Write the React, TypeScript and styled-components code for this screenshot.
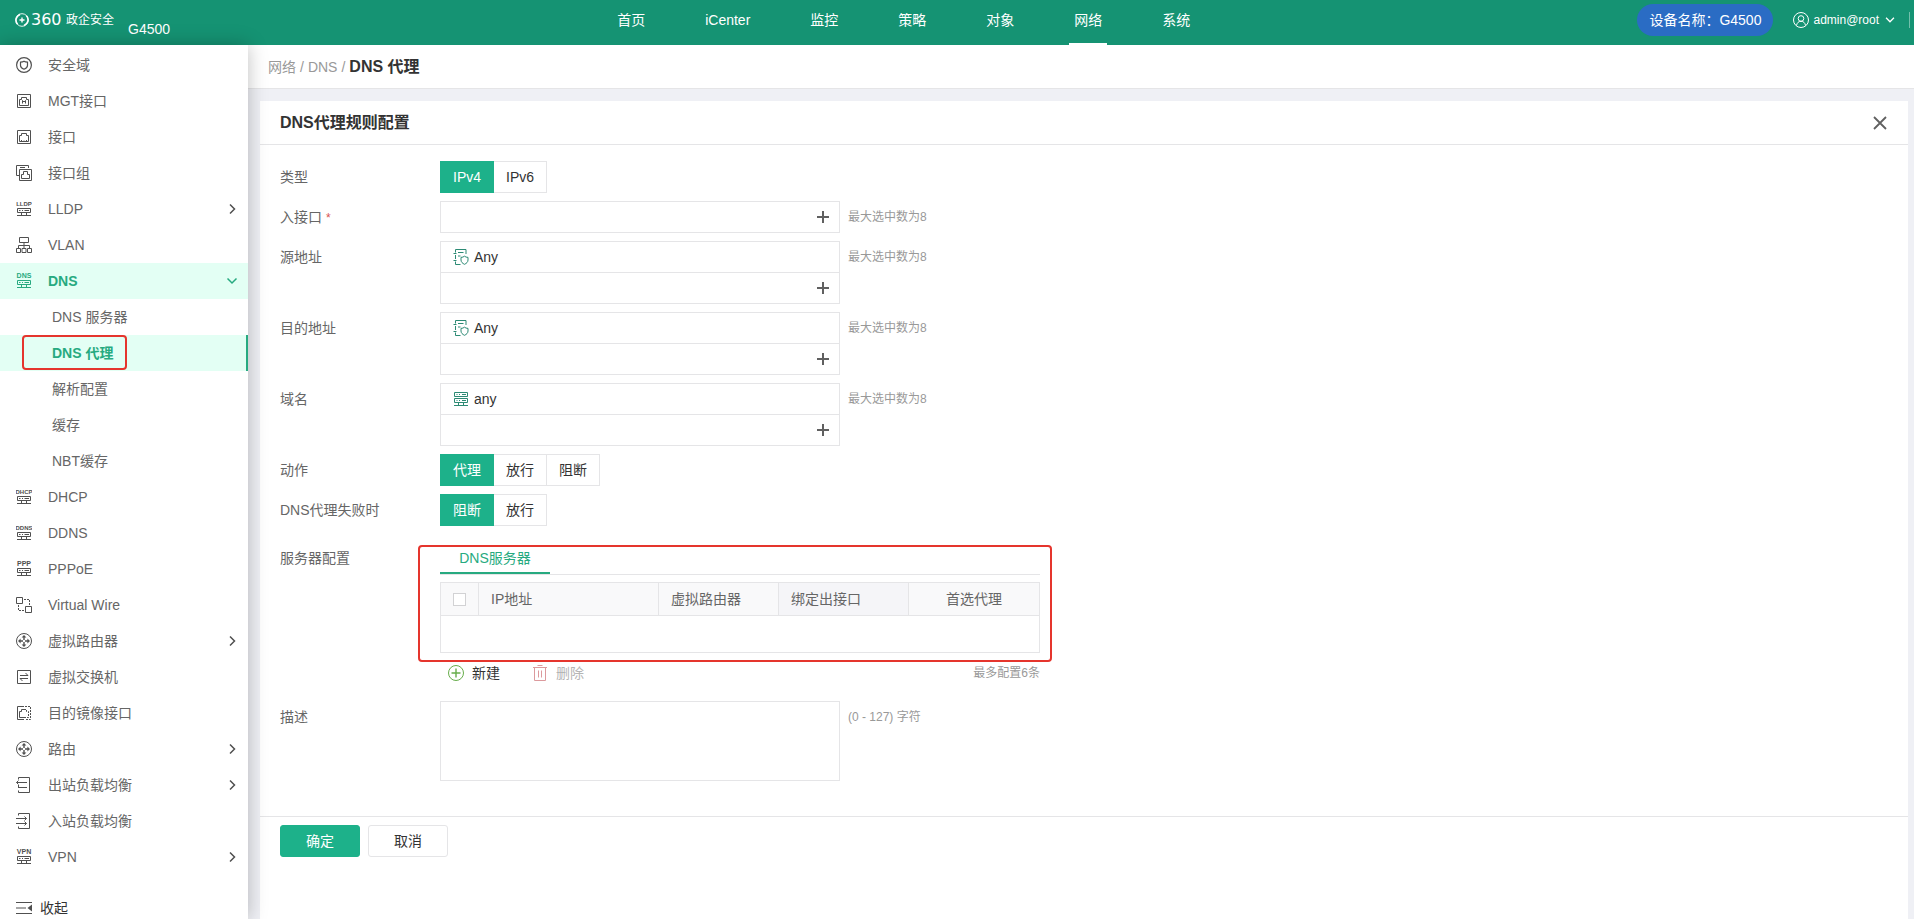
import React, { useState } from 'react';
import styled, { createGlobalStyle, css } from 'styled-components';

const color = {
  header: '#159373',
  primary: '#1db18a',
  active: '#27aa80',
  activeBg: '#e3fff4',
  text: '#333',
  label: '#666',
  icon: '#505050',
  muted: '#999',
  border: '#e5e5e7',
  page: '#eff0f5',
  mark: '#e5352d',
};

const fontStack = '"Liberation Sans", "Noto Sans CJK SC", sans-serif';

const GlobalStyle = createGlobalStyle`
  *, *::before, *::after { box-sizing: border-box; }
  body {
    margin: 0;
    background: ${color.page};
    color: ${color.text};
    font-family: ${fontStack};
    font-size: 14px;
    line-height: 20px;
  }
  button, input, textarea { font: inherit; color: inherit; }
  a { color: inherit; text-decoration: none; }
  svg { display: block; flex: none; }
`;

/* ---------- icons ---------- */

const Svg = styled.svg.attrs({ fill: 'none', stroke: 'currentColor', 'aria-hidden': true })<{ $size?: number }>`
  width: ${(p) => p.$size ?? 16}px;
  height: ${(p) => p.$size ?? 16}px;
`;

const Icon = ({ size = 16, children }: { size?: number; children: React.ReactNode }) => (
  <Svg $size={size} viewBox="0 0 16 16">
    {children}
  </Svg>
);

const ShieldIcon = () => (
  <Icon>
    <circle cx="8" cy="8" r="7.4" strokeWidth="1.2" />
    <path
      d="M4.500 5.200C6 5 7 4.800 8 4.200c1 .6 2 .8 3.500 1v3.300c0 1.700-1.500 2.900-3.500 3.700-2-.8-3.500-2-3.500-3.700z"
      strokeWidth="1.200"
    />
  </Icon>
);

const PortIcon = ({ management }: { management?: boolean }) => (
  <Icon>
    <path d="M1.500 1.500h13v13h-13z" />
    <path d="M3.500 12.500v-6h2v-2h5v2h2v6z" />
    {management ? (
      <path d="M6.500 10.500v-3l1.500 1.500 1.500-1.500v3" />
    ) : (
      <path d="M5.500 12.500v-1.500M8 12.500v-1M10.500 12.500v-1.500" />
    )}
  </Icon>
);

const PortGroupIcon = () => (
  <Icon>
    <path d="M3 10.500H.5V.5h12V3M4 2.500h5" />
    <path d="M3.500 4.500h12v11h-12z" />
    <path d="M5.500 13.500v-4h2v-3h4v3h2v4z" />
  </Icon>
);

const ServerIcon = ({ label }: { label: string }) => {
  const long = label.length > 3;
  return (
    <Icon>
      <text
        x="8"
        y="5"
        textAnchor="middle"
        fontSize={long ? 6 : 7}
        fontWeight="700"
        fill="currentColor"
        stroke="none"
        fontFamily={long ? 'Liberation Sans Narrow, Liberation Sans' : 'Liberation Sans'}
      >
        {label}
      </text>
      <path d="M1.500 7.500h13v4h-13z" />
      <path d="M3 9.500h1.500M6 9.500h1M8.500 9.500H13M5.500 11.500v3M10.500 11.500v3M1 14.500h14" />
    </Icon>
  );
};

const TreeIcon = () => (
  <Icon>
    <path d="M3.500 .5h9v5h-9zM8 5.500V11M2.500 11V8.500h11V11M.5 11.500h4v4h-4zM6 11.500h4v4H6zM11.500 11.500h4v4h-4z" />
  </Icon>
);

const WireIcon = () => (
  <Icon>
    <path d="M.5 .5h6v6h-6zM9.500 9.500h6v6h-6z" />
    <path d="M8 2.500h5.500V9M2.500 8v5.500H9" strokeDasharray="2 1" />
  </Icon>
);

const RouterIcon = () => (
  <Icon>
    <circle cx="8" cy="8" r="7.500" />
    <path
      d="M8 2l2.400 2.600H5.600zM8 14l-2.400-2.600h4.800zM2 8l2.600-2.400v4.800zM14 8l-2.600 2.400V5.600z"
      fill="currentColor"
      stroke="none"
    />
    <path d="M8 4v3M8 9v3M4 8h3M9 8h3" strokeWidth="1.400" />
  </Icon>
);

const SwitchIcon = () => (
  <Icon>
    <path d="M1.500 1.500h13v13h-13zM4 6.500h8L9.500 4M12 9.500H4l2.500 2.500" />
  </Icon>
);

const MirrorIcon = () => (
  <Icon>
    <path d="M8 1.500H1.500v13H8" />
    <path d="M9 1.500h5.500v13H9" strokeDasharray="2 1" />
    <path d="M8 4.500H5.500v2h-2v6H8" />
    <path d="M8 4.500h2.500v2h2v6H8" strokeDasharray="2 1" />
  </Icon>
);

const OutboundIcon = () => (
  <Icon>
    <path d="M2.500 2.500v-2h11v15h-11v-2M.5 5.500H11M2 10.500h9M2.500 3.500L.5 5.500l2 2M2.500 8v2.500" />
  </Icon>
);

const InboundIcon = () => (
  <Icon>
    <path d="M2.500 2.500v-2h11v15h-11v-2M0 5.500h10.500M0 10.500h10.500M8.500 3.500l2 2-2 2M8.500 8.500l2 2-2 2" />
  </Icon>
);

const CollapseIcon = () => (
  <Icon>
    <path d="M0 2.500h16M0 8h10M0 13.500h16" />
    <path d="M16 4.500v7L11.500 8z" fill="currentColor" stroke="none" />
  </Icon>
);

const ChevronRight = () => (
  <Icon>
    <path d="M6 3.500L10.500 8 6 12.500" strokeWidth="1.500" />
  </Icon>
);

const ChevronDown = ({ size }: { size?: number }) => (
  <Icon size={size}>
    <path d="M3.500 5.500L8 10l4.500-4.500" strokeWidth="1.500" />
  </Icon>
);

const UserIcon = () => (
  <Icon>
    <circle cx="8" cy="8" r="7.500" />
    <circle cx="8" cy="6.500" r="2.800" />
    <path d="M3.500 13.500C4 10.800 5.500 9.300 8 9.300s4 1.500 4.500 4.200" />
  </Icon>
);

const CloseIcon = () => (
  <Icon>
    <path d="M2 2l12 12M14 2L2 14" strokeWidth="1.800" />
  </Icon>
);

const PlusIcon = () => (
  <Icon>
    <path d="M8 2v12M2 8h12" strokeWidth="2" />
  </Icon>
);

const AddressIcon = () => (
  <Icon>
    <path d="M2.500 3.500v-3h10.500V5M5 3.500h5.500M2.500 6v4M5 7h2.500M2.500 12.500v3h5M.5 4.500h3M.5 11.500h3" />
    <path d="M11.500 7.200c1 .8 2 1.100 3.500 1.200v2.600c0 2-1.500 3.400-3.500 4.300-2-.9-3.500-2.300-3.500-4.300V8.400c1.500-.1 2.500-.4 3.500-1.200z" />
  </Icon>
);

const DomainIcon = () => (
  <Icon>
    <path d="M1.500 1.500h13v4h-13zM1.500 7.500h13v4h-13zM3.500 3.500h1M6 3.500h1M9 3.500h4M3.500 9.500h1M6 9.500h1M9 9.500h4M5.500 11.500v3M10.500 11.500v3M1 14.500h14" />
  </Icon>
);

const AddIcon = () => (
  <Icon>
    <circle cx="8" cy="8" r="7.500" />
    <path d="M8 3.500v9M3.500 8h9" strokeWidth="1.400" />
  </Icon>
);

const TrashIcon = () => (
  <Icon>
    <path d="M1 2.500h14M5.500 .5h5M2.500 2.500v13h11v-13M6.500 5.500v7M9.500 5.500v7" />
  </Icon>
);

const LogoIcon = () => (
  <Svg $size={14} viewBox="0 0 14 14">
    <circle cx="7" cy="7" r="6.300" strokeWidth=".9" />
    <path d="M2.600 11.200A6 6 0 0 1 5 1.500M11.400 2.800A6 6 0 0 1 9 12.500" strokeWidth="1.500" />
    <path d="M7 4.500v5M4.500 7h5" strokeWidth="1.400" />
  </Svg>
);

/* ---------- header ---------- */

const Page = styled.div`
  display: flex;
  flex-direction: column;
  min-height: 100vh;
`;

const Header = styled.header`
  display: flex;
  justify-content: space-between;
  height: 45px;
  padding: 0 4px 0 15px;
  background: ${color.header};
  color: #fff;
`;

const Brand = styled.div`
  display: flex;
  gap: 14px;
`;

const Logo = styled.a`
  display: flex;
  align-items: center;
  gap: 2px;
  height: 40px;
  width: 99px;
  white-space: nowrap;
`;

const LogoDigits = styled.span`
  flex: 1;
  font-family: 'DejaVu Sans', sans-serif;
  font-size: 16px;
`;

const LogoName = styled.span`
  font-size: 12px;
`;

const Model = styled.span`
  padding-top: 19px;
`;

const TopNav = styled.nav`
  display: flex;
`;

const TopLink = styled.a<{ $active?: boolean }>`
  display: flex;
  flex-direction: column;
  align-items: center;
  justify-content: space-between;
  padding: 10px 30px 0;

  &::after {
    content: '';
    width: 38px;
    height: 2px;
    margin: 0 -5px;
    background: ${(p) => (p.$active ? '#fff' : 'transparent')};
  }
`;

const HeaderTools = styled.div`
  display: flex;
  align-items: center;
  height: 40px;
`;

const DevicePill = styled.span`
  padding: 6px 12px;
  border-radius: 16px;
  background: #2a6cc4;
  white-space: nowrap;
`;

const UserButton = styled.button`
  display: flex;
  align-items: center;
  gap: 4px;
  margin-left: 20px;
  padding: 0 12px 0 0;
  border: 0;
  border-right: 1px solid #73bfab;
  background: none;
  font-size: 12px;
  line-height: 16px;
`;

/* ---------- sidebar ---------- */

const Body = styled.div`
  display: flex;
  flex: 1;
`;

const Sidebar = styled.aside`
  position: relative;
  z-index: 1;
  display: flex;
  flex-direction: column;
  flex: none;
  width: 248px;
  padding-top: 2px;
  background: #fff;
  box-shadow: 0 0 18px rgba(0, 0, 0, 0.25);
  color: ${color.label};
`;

const activeRow = css`
  background: ${color.activeBg};
  color: ${color.active};
  font-weight: 700;
`;

const SideLink = styled.a<{ $active?: boolean }>`
  display: flex;
  align-items: center;
  gap: 16px;
  height: 36px;
  padding: 0 8px 0 16px;

  svg { color: ${color.icon}; }
  ${(p) => p.$active && activeRow}
  ${(p) => p.$active && css`svg { color: ${color.active}; }`}
`;

const SideText = styled.span`
  flex: 1;
`;

const SubLink = styled.a<{ $active?: boolean }>`
  position: relative;
  display: flex;
  align-items: center;
  height: 36px;
  padding-left: 52px;
  ${(p) => p.$active && activeRow}
  border-right: 2px solid ${(p) => (p.$active ? color.active : 'transparent')};
`;

const Marker = styled.span`
  position: absolute;
  border: 2px solid ${color.mark};
  border-radius: 4px;
  pointer-events: none;
`;

const LinkMarker = styled(Marker)`
  inset: 0 119px 1px 22px;
`;

const CollapseButton = styled.button`
  display: flex;
  align-items: center;
  gap: 8px;
  margin-top: auto;
  padding: 0 16px 1px;
  border: 0;
  background: none;
  color: ${color.text};

  svg { color: ${color.icon}; }
`;

/* ---------- content ---------- */

const Content = styled.main`
  display: flex;
  flex-direction: column;
  flex: 1;
  min-width: 0;
`;

const Breadcrumb = styled.nav`
  display: flex;
  align-items: baseline;
  gap: 4px;
  height: 44px;
  padding: 10px 20px 0;
  border-bottom: 1px solid ${color.border};
  background: #fff;
  color: ${color.muted};
`;

const Current = styled.strong`
  color: ${color.text};
  font-size: 16px;
  line-height: 24px;
`;

const Panel = styled.section`
  flex: 1;
  margin: 12px 6px 0 12px;
  background: #fff;
`;

const PanelHeader = styled.header`
  display: flex;
  align-items: center;
  justify-content: space-between;
  height: 44px;
  padding: 0 20px;
  border-bottom: 1px solid ${color.border};
`;

const PanelTitle = styled.h1`
  margin: 0;
  font-size: 16px;
  line-height: 24px;
`;

const IconButton = styled.button`
  display: flex;
  padding: 0;
  border: 0;
  background: none;
  color: #606060;
`;

const Form = styled.form`
  display: flex;
  flex-direction: column;
`;

const Fields = styled.div`
  display: flex;
  flex-direction: column;
  gap: 8px;
  padding: 16px 20px 35px;
`;

const Row = styled.div<{ $spaced?: boolean }>`
  display: flex;
  align-items: flex-start;
  margin-top: ${(p) => (p.$spaced ? 8 : 0)}px;
`;

const rowLabel = css`
  width: 160px;
  flex: none;
  line-height: 32px;
  color: ${color.label};
`;

const RowLabel = styled.label`
  ${rowLabel}
`;

const RowCaption = styled.span`
  ${rowLabel}
`;

const Required = styled.span`
  margin-left: 4px;
  color: #d9534f;
  font-size: 12px;
  line-height: 16px;
`;

const Hint = styled.span`
  margin-left: 8px;
  color: ${color.muted};
  font-size: 12px;
  line-height: 32px;
`;

const Segments = styled.div`
  display: flex;
`;

const Segment = styled.label<{ $checked: boolean }>`
  position: relative;
  min-width: 54px;
  padding: 5px 12px;
  border: 1px solid ${(p) => (p.$checked ? color.primary : color.border)};
  background: ${(p) => (p.$checked ? color.primary : '#fff')};
  color: ${(p) => (p.$checked ? '#fff' : color.text)};
  text-align: center;
  cursor: pointer;

  & + & { margin-left: -1px; }
  ${(p) => p.$checked && 'z-index: 1;'}

  input {
    position: absolute;
    inset: 0;
    margin: 0;
    opacity: 0;
    cursor: pointer;
  }
`;

const Picker = styled.div`
  width: 400px;
  border: 1px solid ${color.border};
  background: #fff;
`;

const PickedItem = styled.div`
  display: flex;
  align-items: center;
  gap: 5px;
  height: 31px;
  padding: 0 12px;
  border-bottom: 1px solid ${color.border};

  svg { color: #2c8a74; }
`;

const PickerEntry = styled.div`
  display: flex;
  align-items: center;
  height: 30px;
  padding-right: 8px;
`;

const PickerInput = styled.input`
  flex: 1;
  min-width: 0;
  height: 100%;
  padding: 0 12px;
  border: 0;
  outline: 0;
  background: none;
`;

const ServerBlock = styled.div`
  width: 600px;
`;

const ServerFrame = styled.div`
  position: relative;
`;

const FrameMarker = styled(Marker)`
  inset: 3px -12px -9px -22px;
`;

const Tabs = styled.div`
  display: flex;
  margin-bottom: 7px;
  border-bottom: 1px solid ${color.border};
`;

const Tab = styled.button`
  width: 110px;
  height: 32px;
  padding: 2px 0 0;
  border: 0;
  border-bottom: 2px solid ${color.active};
  background: none;
  color: ${color.active};
`;

const Table = styled.table`
  width: 100%;
  border: 1px solid ${color.border};
  border-spacing: 0;
  table-layout: fixed;
  color: ${color.label};

  td { height: 36px; padding: 0; }
`;

const HeadCell = styled.th<{ $width?: number; $center?: boolean; $hover?: boolean }>`
  width: ${(p) => (p.$width ? `${p.$width}px` : 'auto')};
  height: 33px;
  padding: 0 12px;
  border-right: 1px solid ${color.border};
  border-bottom: 1px solid ${color.border};
  background: ${(p) => (p.$hover ? '#f5f5f8' : '#f9f9fa')};
  font-weight: 400;
  text-align: ${(p) => (p.$center ? 'center' : 'left')};

  &:last-child { border-right: 0; }
`;

const Checkbox = styled.input.attrs({ type: 'checkbox' })`
  display: block;
  appearance: none;
  width: 13px;
  height: 13px;
  margin: 0;
  border: 1px solid #d2d2d4;
  background: #fff;
`;

const Actions = styled.div`
  display: flex;
  align-items: center;
  gap: 32px;
  height: 24px;
  margin-top: 8px;
  padding-left: 8px;
`;

const ActionButton = styled.button<{ $icon: string }>`
  display: flex;
  align-items: center;
  gap: 8px;
  padding: 0;
  border: 0;
  background: none;

  svg { color: ${(p) => p.$icon}; }
  &:disabled { color: #b5b5b5; }
`;

const Limit = styled.span`
  margin-left: auto;
  color: ${color.muted};
  font-size: 12px;
`;

const TextArea = styled.textarea`
  display: block;
  width: 400px;
  height: 80px;
  padding: 5px 12px;
  border: 1px solid ${color.border};
  outline: 0;
  resize: none;
`;

const Footer = styled.footer`
  display: flex;
  gap: 8px;
  padding: 8px 20px;
  border-top: 1px solid ${color.border};
`;

const Button = styled.button<{ $primary?: boolean }>`
  width: 80px;
  height: 32px;
  padding: 0;
  border: 1px solid ${(p) => (p.$primary ? color.primary : color.border)};
  border-radius: 3px;
  background: ${(p) => (p.$primary ? color.primary : '#fff')};
  color: ${(p) => (p.$primary ? '#fff' : color.text)};
`;

/* ---------- data ---------- */

const topItems = ['首页', 'iCenter', '监控', '策略', '对象', '网络', '系统'];

interface SideItem {
  text: string;
  icon: React.ReactNode;
  expandable?: boolean;
  children?: string[];
}

const sideItems: SideItem[] = [
  { text: '安全域', icon: <ShieldIcon /> },
  { text: 'MGT接口', icon: <PortIcon management /> },
  { text: '接口', icon: <PortIcon /> },
  { text: '接口组', icon: <PortGroupIcon /> },
  { text: 'LLDP', icon: <ServerIcon label="LLDP" />, expandable: true },
  { text: 'VLAN', icon: <TreeIcon /> },
  {
    text: 'DNS',
    icon: <ServerIcon label="DNS" />,
    children: ['DNS 服务器', 'DNS 代理', '解析配置', '缓存', 'NBT缓存'],
  },
  { text: 'DHCP', icon: <ServerIcon label="DHCP" /> },
  { text: 'DDNS', icon: <ServerIcon label="DDNS" /> },
  { text: 'PPPoE', icon: <ServerIcon label="PPP" /> },
  { text: 'Virtual Wire', icon: <WireIcon /> },
  { text: '虚拟路由器', icon: <RouterIcon />, expandable: true },
  { text: '虚拟交换机', icon: <SwitchIcon /> },
  { text: '目的镜像接口', icon: <MirrorIcon /> },
  { text: '路由', icon: <RouterIcon />, expandable: true },
  { text: '出站负载均衡', icon: <OutboundIcon />, expandable: true },
  { text: '入站负载均衡', icon: <InboundIcon /> },
  { text: 'VPN', icon: <ServerIcon label="VPN" />, expandable: true },
];

/* ---------- form parts ---------- */

function SegmentRow({ label, name, options }: { label: string; name: string; options: string[] }) {
  const [value, setValue] = useState(options[0]);
  return (
    <Row role="radiogroup" aria-label={label}>
      <RowCaption>{label}</RowCaption>
      <Segments>
        {options.map((option) => (
          <Segment key={option} $checked={option === value}>
            <input type="radio" name={name} checked={option === value} onChange={() => setValue(option)} />
            {option}
          </Segment>
        ))}
      </Segments>
    </Row>
  );
}

interface PickerRowProps {
  id: string;
  label: string;
  required?: boolean;
  item?: string;
  icon?: React.ReactNode;
}

function PickerRow({ id, label, required, item, icon }: PickerRowProps) {
  return (
    <Row>
      <RowLabel htmlFor={id}>
        {label}
        {required && <Required>*</Required>}
      </RowLabel>
      <Picker>
        {item && (
          <PickedItem>
            {icon}
            {item}
          </PickedItem>
        )}
        <PickerEntry>
          <PickerInput id={id} type="text" />
          <IconButton type="button" aria-label="添加">
            <PlusIcon />
          </IconButton>
        </PickerEntry>
      </Picker>
      <Hint>最大选中数为8</Hint>
    </Row>
  );
}

export default function App() {
  return (
    <>
      <GlobalStyle />
      <Page>
        <Header>
          <Brand>
            <Logo href="#">
              <LogoIcon />
              <LogoDigits>360</LogoDigits>
              <LogoName>政企安全</LogoName>
            </Logo>
            <Model>G4500</Model>
          </Brand>
          <TopNav>
            {topItems.map((item) => (
              <TopLink key={item} href="#" $active={item === '网络'}>
                {item}
              </TopLink>
            ))}
          </TopNav>
          <HeaderTools>
            <DevicePill>设备名称：G4500</DevicePill>
            <UserButton type="button">
              <UserIcon />
              admin@root
              <ChevronDown size={14} />
            </UserButton>
          </HeaderTools>
        </Header>
        <Body>
          <Sidebar>
            <nav>
              {sideItems.map((item) => (
                <React.Fragment key={item.text}>
                  <SideLink href="#" $active={!!item.children}>
                    {item.icon}
                    <SideText>{item.text}</SideText>
                    {item.expandable && <ChevronRight />}
                    {item.children && <ChevronDown />}
                  </SideLink>
                  {item.children?.map((child) => {
                    const active = child === 'DNS 代理';
                    return (
                      <SubLink key={child} href="#" $active={active}>
                        {child}
                        {active && <LinkMarker />}
                      </SubLink>
                    );
                  })}
                </React.Fragment>
              ))}
            </nav>
            <CollapseButton type="button">
              <CollapseIcon />
              收起
            </CollapseButton>
          </Sidebar>
          <Content>
            <Breadcrumb>
              <a href="#">网络</a>
              <span>/</span>
              <a href="#">DNS</a>
              <span>/</span>
              <Current>DNS 代理</Current>
            </Breadcrumb>
            <Panel>
              <PanelHeader>
                <PanelTitle>DNS代理规则配置</PanelTitle>
                <IconButton type="button" aria-label="关闭">
                  <CloseIcon />
                </IconButton>
              </PanelHeader>
              <Form onSubmit={(event) => event.preventDefault()}>
                <Fields>
                  <SegmentRow label="类型" name="type" options={['IPv4', 'IPv6']} />
                  <PickerRow id="in-interface" label="入接口" required />
                  <PickerRow id="source" label="源地址" item="Any" icon={<AddressIcon />} />
                  <PickerRow id="destination" label="目的地址" item="Any" icon={<AddressIcon />} />
                  <PickerRow id="domain" label="域名" item="any" icon={<DomainIcon />} />
                  <SegmentRow label="动作" name="action" options={['代理', '放行', '阻断']} />
                  <SegmentRow label="DNS代理失败时" name="fallback" options={['阻断', '放行']} />
                  <Row $spaced>
                    <RowCaption>服务器配置</RowCaption>
                    <ServerBlock>
                      <ServerFrame>
                        <Tabs>
                          <Tab type="button">DNS服务器</Tab>
                        </Tabs>
                        <Table>
                          <thead>
                            <tr>
                              <HeadCell $width={38}>
                                <Checkbox aria-label="全选" />
                              </HeadCell>
                              <HeadCell $width={180}>IP地址</HeadCell>
                              <HeadCell $width={120}>虚拟路由器</HeadCell>
                              <HeadCell $width={130} $hover>
                                绑定出接口
                              </HeadCell>
                              <HeadCell $center>首选代理</HeadCell>
                            </tr>
                          </thead>
                          <tbody>
                            <tr>
                              <td colSpan={5} />
                            </tr>
                          </tbody>
                        </Table>
                        <FrameMarker />
                      </ServerFrame>
                      <Actions>
                        <ActionButton type="button" $icon="#67ad4b">
                          <AddIcon />
                          新建
                        </ActionButton>
                        <ActionButton type="button" $icon="#dc9a9d" disabled>
                          <TrashIcon />
                          删除
                        </ActionButton>
                        <Limit>最多配置6条</Limit>
                      </Actions>
                    </ServerBlock>
                  </Row>
                  <Row $spaced>
                    <RowLabel htmlFor="description">描述</RowLabel>
                    <TextArea id="description" />
                    <Hint>(0 - 127) 字符</Hint>
                  </Row>
                </Fields>
                <Footer>
                  <Button type="submit" $primary>
                    确定
                  </Button>
                  <Button type="button">取消</Button>
                </Footer>
              </Form>
            </Panel>
          </Content>
        </Body>
      </Page>
    </>
  );
}
